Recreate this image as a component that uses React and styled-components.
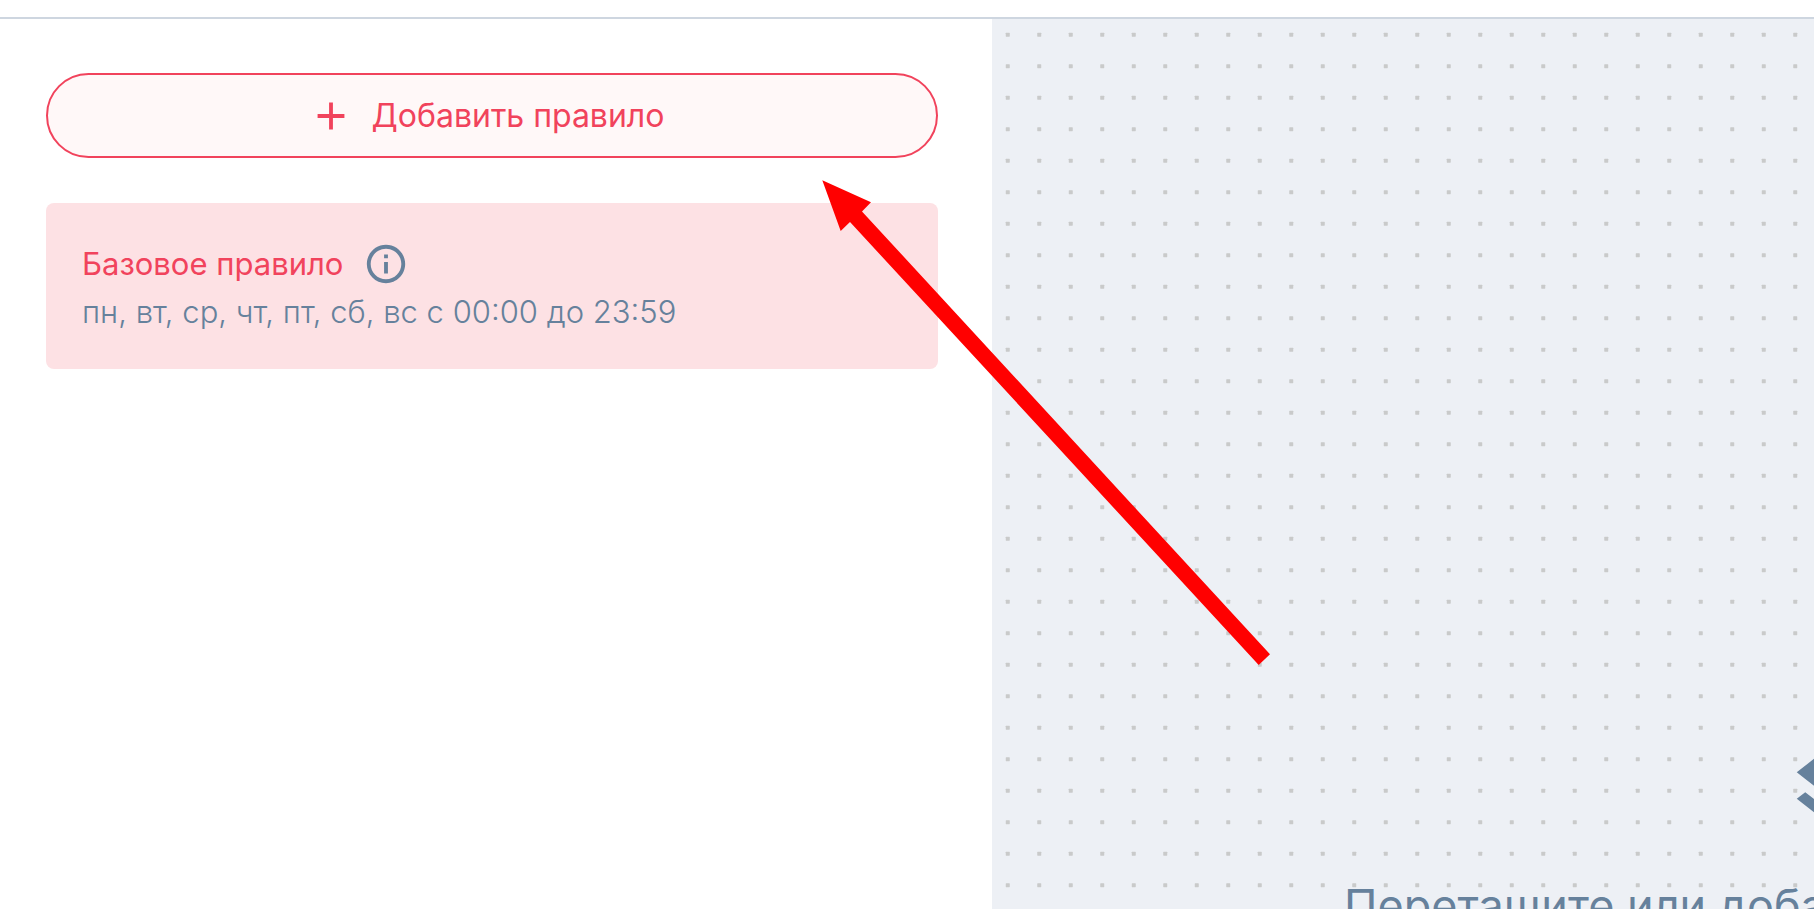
import React, { useState } from "react";
import styled, { createGlobalStyle } from "styled-components";

const rules = [
  {
    id: 1,
    name: "Базовое правило",
    schedule: "пн, вт, ср, чт, пт, сб, вс с 00:00 до 23:59",
  },
];

export default function App() {
  const [selected, setSelected] = useState(1);

  return (
    <>
      <GlobalStyle />
      <Page>
        <TopBar />
        <Content>
          <Sidebar>
            <AddButton type="button">
              <Icon viewBox="0 0 24 24" aria-hidden="true">
                <path d="M19 13h-6v6h-2v-6H5v-2h6V5h2v6h6v2z" />
              </Icon>
              Добавить правило
            </AddButton>
            {rules.map((rule) => (
              <RuleCard
                key={rule.id}
                $active={rule.id === selected}
                onClick={() => setSelected(rule.id)}
              >
                <RuleHeader>
                  <RuleName>{rule.name}</RuleName>
                  <InfoButton type="button" aria-label="Информация">
                    <Icon viewBox="0 0 24 24" aria-hidden="true">
                      <path d="M11 7h2v2h-2zm0 4h2v6h-2zm1-9C6.48 2 2 6.48 2 12s4.48 10 10 10 10-4.48 10-10S17.52 2 12 2zm0 18c-4.41 0-8-3.59-8-8s3.59-8 8-8 8 3.59 8 8-3.59 8-8 8z" />
                    </Icon>
                  </InfoButton>
                </RuleHeader>
                <Schedule>{rule.schedule}</Schedule>
              </RuleCard>
            ))}
          </Sidebar>
          <Board>
            <Dots aria-hidden="true">
              <defs>
                <pattern id="dots" width="63" height="63" patternUnits="userSpaceOnUse">
                  <rect x="13.75" y="13.75" width="4" height="4" rx="0.4" />
                  <rect x="45.25" y="13.75" width="4" height="4" rx="0.4" />
                  <rect x="13.75" y="45.25" width="4" height="4" rx="0.4" />
                  <rect x="45.25" y="45.25" width="4" height="4" rx="0.4" />
                </pattern>
              </defs>
              <rect width="100%" height="100%" fill="url(#dots)" />
            </Dots>
            <EmptyState>
              <LayersIcon viewBox="0 0 24 24" aria-hidden="true">
                <path d="m11.99 18.54-7.37-5.73L3 14.07l9 7 9-7-1.63-1.27-7.38 5.74zM12 16l7.36-5.73L21 9l-9-7-9 7 1.63 1.27L12 16z" />
              </LayersIcon>
              <EmptyText>Перетащите или добавьте</EmptyText>
            </EmptyState>
          </Board>
        </Content>
        <Arrow viewBox="0 0 449 486" aria-hidden="true">
          <path d="M0.3 0.3 49 22.3 40 31.4 448 474.3 436.7 485 28 42 18.7 51Z" />
        </Arrow>
      </Page>
    </>
  );
}

const GlobalStyle = createGlobalStyle`
  * {
    box-sizing: border-box;
  }

  body {
    margin: 0;
    background: #fff;
    font-family: Inter, "Open Sans", sans-serif;
  }
`;

const Page = styled.div`
  position: relative;
  height: 100vh;
  display: flex;
  flex-direction: column;
  overflow: hidden;
`;

const TopBar = styled.header`
  flex: none;
  height: 19px;
  border-bottom: 2px solid #ced6e0;
`;

const Content = styled.main`
  flex: 1;
  min-height: 0;
  display: grid;
  grid-template-columns: minmax(0, 496fr) minmax(0, 411fr);
`;

const Sidebar = styled.aside`
  display: flex;
  flex-direction: column;
  gap: 45px;
  padding: 54px 54px 54px 46px;
`;

const AddButton = styled.button`
  display: flex;
  align-items: center;
  justify-content: center;
  gap: 18px;
  height: 85px;
  padding: 0 12px 0 0;
  border: 2px solid #f1435c;
  border-radius: 43px;
  background: #fff8f8;
  color: #f1435c;
  font: inherit;
  font-size: 32px;
  cursor: pointer;
`;

const Icon = styled.svg`
  flex: none;
  display: block;
  width: 46px;
  height: 46px;
  fill: currentColor;
`;

const RuleCard = styled.section`
  padding: 37px 36px 34px;
  border-radius: 8px;
  background: ${(props) => (props.$active ? "#fde1e4" : "#fff")};
  cursor: pointer;
`;

const RuleHeader = styled.div`
  display: flex;
  align-items: center;
  gap: 20px;
`;

const RuleName = styled.h2`
  margin: 0;
  color: #f1435c;
  font-size: 31px;
  font-weight: 400;
  line-height: 48px;
`;

const InfoButton = styled.button`
  padding: 0;
  border: none;
  background: none;
  color: #66819c;
  cursor: pointer;
`;

const Schedule = styled.p`
  margin: 0;
  color: #66819c;
  font-size: 31px;
  font-weight: 300;
  line-height: 47px;
`;

const Board = styled.section`
  position: relative;
  overflow: hidden;
  background: #edf0f5;
`;

const Dots = styled.svg`
  position: absolute;
  inset: 0;
  width: 100%;
  height: 100%;
  fill: #c9caca;
`;

const EmptyState = styled.div`
  position: relative;
  display: flex;
  flex-direction: column;
  align-items: center;
  width: 1704px;
  padding-top: 706px;
  color: #66819c;
`;

const LayersIcon = styled.svg`
  width: 126px;
  height: 126px;
  fill: currentColor;
`;

const EmptyText = styled.p`
  width: 1000px;
  margin: 23px 0 0;
  font-size: 45px;
  line-height: 64px;
  white-space: nowrap;
`;

const Arrow = styled.svg`
  position: absolute;
  left: 822px;
  top: 180px;
  width: 449px;
  height: 486px;
  fill: #ff0000;
  pointer-events: none;
`;
